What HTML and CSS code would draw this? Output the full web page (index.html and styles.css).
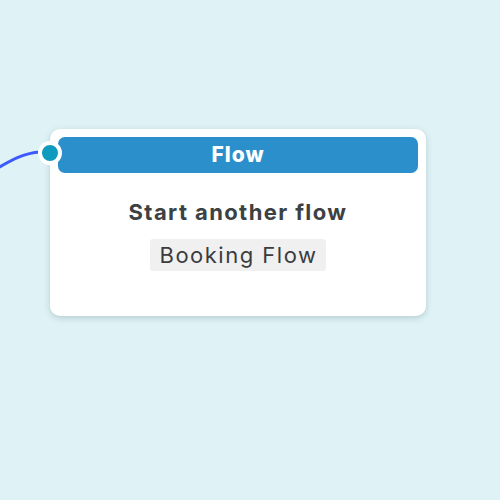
FILE: index.html
```html
<!DOCTYPE html>
<html>

<head>
  <meta charset="utf-8">

  <title>Flow node</title>

  <link rel="stylesheet" href="styles.css">
</head>

<body>
  <div class="canvas">
    <svg class="edge" width="60" height="200" viewBox="0 0 60 200">
      <path d="M -4 169 C 12 160, 24 153, 40 152" fill="none" stroke="#3d5afe" stroke-width="3" stroke-linecap="round" />
    </svg>

    <div class="node">
      <span class="handle"></span>
      <div class="node-header">Flow</div>
      <div class="node-body">
        <div class="node-title">Start another flow</div>
        <div class="node-chip">Booking Flow</div>
      </div>
    </div>
  </div>
</body>

</html>
```

FILE: styles.css
```css
* {
  font-family: Inter, "Noto Sans", sans-serif;
  box-sizing: border-box;
}

body {
  margin: 0;
  background-color: #dff3f6;
}

.canvas {
  position: relative;
  width: 500px;
  height: 500px;
  overflow: hidden;
}

.edge {
  position: absolute;
  left: 0;
  top: 0;
}

.node {
  position: absolute;
  left: 50px;
  top: 129px;
  width: 376px;
  height: 187px;
  padding: 8px;
  background-color: #fff;
  border-radius: 10px;
  box-shadow: 0 2px 6px rgba(60, 90, 100, 0.25);
}

.handle {
  position: absolute;
  left: -12px;
  top: 12px;
  width: 24px;
  height: 24px;
  border-radius: 50%;
  background-color: #0e9bbd;
  border: 4px solid #fff;
}

.node-header {
  height: 36px;
  line-height: 36px;
  background-color: #2a8fcb;
  color: #fff;
  border-radius: 7px;
  text-align: center;
  font-size: 21px;
  font-weight: 800;
  letter-spacing: 1px;
}

.node-body {
  display: flex;
  flex-direction: column;
  align-items: center;
  padding-top: 26px;
  gap: 14px;
}

.node-title {
  font-size: 22px;
  font-weight: 700;
  letter-spacing: 1.4px;
  color: #3c4144;
}

.node-chip {
  padding: 3px 9px 3px 10px;
  background-color: #f0f0f0;
  border-radius: 3px;
  color: #3a3c3e;
  font-size: 22px;
  letter-spacing: 1.5px;
}
```
